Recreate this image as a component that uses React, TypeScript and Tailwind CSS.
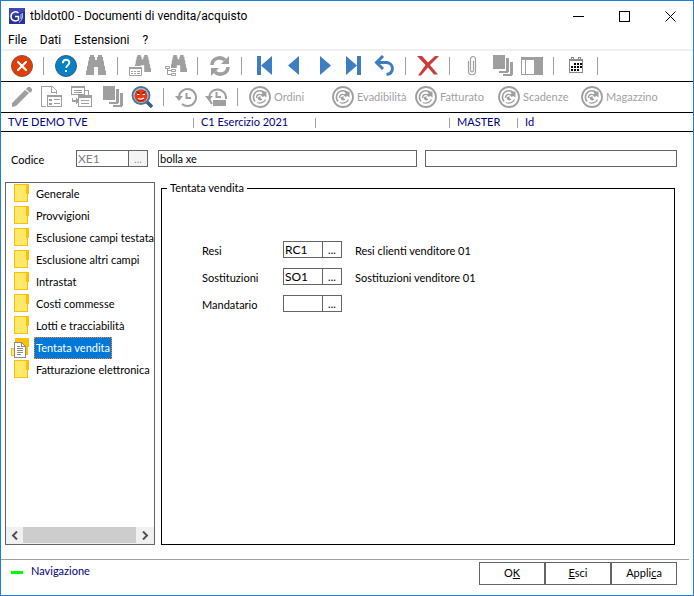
import type { ReactNode } from 'react';
import clsx from 'clsx';

const SECTIONS = [
  'Generale',
  'Provvigioni',
  'Esclusione campi testata',
  'Esclusione altri campi',
  'Intrastat',
  'Costi commesse',
  'Lotti e tracciabilità',
  'Tentata vendita',
  'Fatturazione elettronica',
];

const SELECTED = 'Tentata vendita';

const FIELDS = [
  { id: 'resi', label: 'Resi', value: 'RC1', description: 'Resi clienti venditore 01' },
  { id: 'sostituzioni', label: 'Sostituzioni', value: 'SO1', description: 'Sostituzioni venditore 01' },
  { id: 'mandatario', label: 'Mandatario', value: '', description: '' },
];

const LINKS = ['Ordini', 'Evadibilità', 'Fatturato', 'Scadenze', 'Magazzino'];

const GRAY = '#9f9f9f';
const BLUE = '#3d7ec3';

/* ---------- icons, all on a 22x22 grid ---------- */

function Icon({ children, crisp }: { children: ReactNode; crisp?: boolean }) {
  return (
    <svg
      width="22"
      height="22"
      viewBox="0 0 22 22"
      fill="none"
      className="shrink-0"
      shapeRendering={crisp ? 'crispEdges' : undefined}
      aria-hidden="true"
    >
      {children}
    </svg>
  );
}

const BINOCULARS = 'M4 0h4v2h1v3h2V2h1V0h4v2h1v3l1 2v3l1 2v3l1 1v4h-8v-8H8v8H0v-4l1-1v-3l1-2V7l1-2V2h1z';

function CloseCircle() {
  return (
    <Icon>
      <circle cx="11" cy="11" r="10.5" fill="#e13d05" stroke="#8d5040" />
      <path d="M7 7l8 8M15 7l-8 8" stroke="#fff" strokeWidth="2.2" strokeLinecap="round" />
    </Icon>
  );
}

function HelpCircle() {
  return (
    <Icon>
      <circle cx="11" cy="11" r="10.5" fill="#0a80c4" stroke="#2f5f80" />
      <path d="M7.800 8.200c0-4.600 6.600-4.400 6.600-.600 0 2.600-3.200 2.800-3.200 5.400" stroke="#fff" strokeWidth="1.8" />
      <path d="M10 15h2v2h-2z" fill="#fff" />
    </Icon>
  );
}

function Binoculars() {
  return (
    <Icon>
      <path d={BINOCULARS} transform="translate(1 0)" fill={GRAY} />
    </Icon>
  );
}

function BinocularsList() {
  return (
    <Icon>
      <path d={BINOCULARS} transform="translate(5 0) scale(.85)" fill={GRAY} />
      <path d="M0 11h14v11H0z" fill="#fff" />
      <path d="M.5 12.5h12v8H.5z" fill="#fff" stroke={GRAY} />
      <path d="M0 12h13v2H0z" fill={GRAY} />
      <path d="M2 16.5h2m1 0h2m1 0h3M2 18.5h2m1 0h2m1 0h3" stroke={GRAY} />
    </Icon>
  );
}

function BinocularsTree() {
  return (
    <Icon>
      <path d={BINOCULARS} transform="translate(5 0) scale(.85)" fill={GRAY} />
      <path d="M0 10h6v3h6v9H0z" fill="#fff" />
      <path d="M.5 11.5h4v2h-4zM6.5 14.5h4v2h-4zM6.5 18.5h4v2h-4zM2.5 14v5.500h4M2.500 15.500h4" stroke={GRAY} />
    </Icon>
  );
}

function Refresh() {
  return (
    <Icon>
      <path d="M3 10c0-7 9-9 13-5" stroke={GRAY} strokeWidth="3.5" />
      <path d="M20 1v8h-8z" fill={GRAY} />
      <path d="M19 12c0 7-9 9-13 5" stroke={GRAY} strokeWidth="3.5" />
      <path d="M2 21v-8h8z" fill={GRAY} />
    </Icon>
  );
}

function First() {
  return (
    <Icon>
      <path d="M4 1h4v19H4zM19 1v19L8 10.500z" fill={BLUE} />
    </Icon>
  );
}

function Previous() {
  return (
    <Icon>
      <path d="M16 1v19L5 10.500z" fill={BLUE} />
    </Icon>
  );
}

function Next() {
  return (
    <Icon>
      <path d="M7 1v19l11-9.500z" fill={BLUE} />
    </Icon>
  );
}

function Last() {
  return (
    <Icon>
      <path d="M14 1h4v19h-4zM3 1v19l11-9.500z" fill={BLUE} />
    </Icon>
  );
}

function Undo() {
  return (
    <Icon>
      <path d="M10 1L3.500 7.500 10 14M4 7.500h10c7 1 7.500 11-.500 12" stroke={BLUE} strokeWidth="3" />
    </Icon>
  );
}

function RedCross() {
  return (
    <Icon>
      <path d="M0 1h5l6 6.500L18 1h4l-9 9 8 9.500h-4L11 12.500l-7 8H1L8.500 10z" fill="#c93c3c" />
    </Icon>
  );
}

function Clip() {
  return (
    <Icon>
      <path
        d="M7.500 6v10c0 5 7 5 7 0V4.500c0-4-5-4-5 0V15c0 2.500 3 2.500 3 0V6"
        stroke={GRAY}
        strokeWidth="1.200"
      />
    </Icon>
  );
}

function Stack() {
  return (
    <Icon crisp>
      <path d="M2 0h12v14H2z" fill={GRAY} />
      <path d="M15 3h3v14l-2 1H8v-2h7zM19 7h3v13l-2 1h-8v-2h7z" fill={GRAY} />
    </Icon>
  );
}

function SidePanel() {
  return (
    <Icon crisp>
      <path d="M0 2h22v18H0z" fill={GRAY} />
      <path d="M1 5h3v14H1zM5 5h8v14H5z" fill="#fff" />
    </Icon>
  );
}

function Calendar() {
  return (
    <Icon crisp>
      <path d="M4.500 4.500h13v13h-13z" stroke="#8a8a8a" />
      <path d="M4 4h14v2H4z" fill="#8a8a8a" />
      <path d="M6.500 2.500h2v2h-2zM13.500 2.500h2v2h-2z" fill="#fff" stroke="#8a8a8a" />
      <path
        d="M9 8h2v2H9zM12 8h2v2h-2zM15 8h2v2h-2zM6 11h2v2H6zM9 11h2v2H9zM12 11h2v2h-2zM15 11h2v2h-2zM6 14h2v2H6zM9 14h2v2H9zM12 14h2v2h-2z"
        fill="#000"
      />
    </Icon>
  );
}

function Pencil() {
  return (
    <Icon>
      <path d="M1 21v-4L14 4l4 3L5 20zM15 3l2-2h2l2 2v2l-2 2z" fill={GRAY} />
    </Icon>
  );
}

function PageForm() {
  return (
    <Icon crisp>
      <path d="M5 20.500H.500v-20h11l4 4V8" stroke={GRAY} />
      <path d="M10.500 1v5H15" stroke={GRAY} />
      <path d="M6.500 9.500h14v11h-14z" fill="#fff" stroke={GRAY} />
      <path d="M6 9h15v2H6zM8 13h3v2H8zM8 17h3v2H8zM13 13h6v1h-6zM13 17h6v1h-6z" fill={GRAY} />
    </Icon>
  );
}

function FormTransfer() {
  return (
    <Icon crisp>
      <path d="M.500.500h13v8H.500z" stroke={GRAY} />
      <path d="M0 0h14v2H0zM3 4h8v1H3zM3 6h8v1H3zM14 4h4v5h-1V5h-3z" fill={GRAY} />
      <path d="M7.500 10.500h13v10h-13z" stroke={GRAY} />
      <path d="M7 9h14v3H7zM10 14h8v1h-8zM10 17h8v1h-8z" fill={GRAY} />
      <path d="M1 12h1v2h3v-2l3 3-3 3v-2H1z" fill={GRAY} />
    </Icon>
  );
}

function Debug() {
  return (
    <Icon>
      <path d="M15 15l6 6" stroke="#395a80" strokeWidth="3.500" />
      <circle cx="10" cy="9.500" r="8.500" fill="#a9c8df" stroke="#4c7297" strokeWidth="1.800" />
      <circle cx="10" cy="9.800" r="6.500" fill="#e83b14" />
      <path d="M5.500 5.500L9 7.500M14.500 5.500L11 7.500" stroke="#611a10" />
      <path d="M6 8.500h2.500M11.500 8.500H14" stroke="#fff" />
      <path d="M7 12.500c2 1 4 .800 6-.500" stroke="#fff" strokeWidth="1.200" />
      <path d="M7 14c2 1 4 .800 6-.500" stroke="#611a10" strokeWidth=".7" />
    </Icon>
  );
}

function History() {
  return (
    <Icon>
      <path d="M4 11a8.500 8.500 0 1 1 3 7" stroke={GRAY} strokeWidth="2" />
      <path d="M0 10h8l-4 5z" fill={GRAY} />
      <path d="M11.500 7v5H16" stroke={GRAY} strokeWidth="2" />
    </Icon>
  );
}

function HistoryLock() {
  return (
    <Icon>
      <path d="M4 11a8.500 8.500 0 0 1 17 2M4 13l3 5" stroke={GRAY} strokeWidth="2" />
      <path d="M0 10h8l-4 5zM8 14h13v6H8z" fill={GRAY} />
      <path d="M11.500 6v5H16" stroke={GRAY} strokeWidth="2" />
    </Icon>
  );
}

function Gauge() {
  return (
    <Icon>
      <circle cx="11" cy="11" r="10" stroke={GRAY} strokeWidth="1.800" />
      <path d="M6 15.500C2.500 11 5.500 4.800 11 4.800c2 0 3.500.700 4.700 1.900" stroke={GRAY} strokeWidth="1.600" />
      <path d="M17.500 5.500v6l-2-1.500-2 1-1.500-2 1.500-1.500-1-1.500z" fill={GRAY} />
      <path d="M7.500 12c0-4.500 5-4.500 6-2M8 16.500c3.500 1.500 7 0 8.500-3" stroke={GRAY} strokeWidth="1.300" />
      <path d="M8.500 11.500l3-1.500v2l2 1.500c-1.500 1.500-4.500 1.500-5-2z" fill={GRAY} />
    </Icon>
  );
}

function FolderIcon() {
  return (
    <svg width="18" height="22" viewBox="0 0 18 22" className="shrink-0" shapeRendering="crispEdges" aria-hidden="true">
      <path d="M3 1h15v10h-1v8H3z" fill="#ffc000" />
      <path d="M4 2h11v9h1v7H4z" fill="#ffe96b" />
    </svg>
  );
}

function OpenFolderIcon() {
  return (
    <svg width="18" height="22" viewBox="0 0 18 22" className="shrink-0" shapeRendering="crispEdges" aria-hidden="true">
      <path d="M4 1h14v9h-1v8H4z" fill="#ffc000" />
      <path d="M.500 11.500h4v7h-4z" fill="#ffe96b" stroke="#ffc000" />
      <path d="M3.500 5.500h7l4 4v11h-11z" fill="#fff" stroke="#8b8b8b" />
      <path d="M10.500 5.500v4h4M6 9.500h3M6 11.500h6M6 13.500h6M6 15.500h6M6 17.500h4" fill="none" stroke="#8b8b8b" />
    </svg>
  );
}

/* ---------- small parts ---------- */

function ToolButton({ label, children, className }: { label: string; children: ReactNode; className?: string }) {
  return (
    <button aria-label={label} className={clsx('flex h-full w-[30px] shrink-0 items-center justify-center', className)}>
      {children}
    </button>
  );
}

function Separator() {
  return <span className="ml-[6px] mr-[7px] h-[18px] w-px shrink-0 bg-[#a0a0a0]" />;
}

function InfoSeparator() {
  return <span className="mr-[7px] h-[10px] w-px shrink-0 bg-[#a0a0a0]" />;
}

function LookupField({ id, value, label }: { id: string; value: string; label: string }) {
  return (
    <div className="flex h-[17px]">
      <input
        id={id}
        defaultValue={value}
        className="w-10 border border-[#646464] px-px text-xs leading-3 outline-none"
      />
      <button
        aria-label={`Cerca ${label}`}
        className="-ml-px w-5 border border-[#646464] leading-3"
      >
        ...
      </button>
    </div>
  );
}

function TitleBar() {
  return (
    <header className="flex h-[30px] shrink-0 items-center pl-2 font-['Roboto','Liberation_Sans',sans-serif]">
      <svg width="16" height="16" viewBox="0 0 16 16" fill="none" aria-hidden="true">
        <path d="M0 0h16v16H0z" fill="#4146b4" />
        <path d="M0 9l16-6v13H0z" fill="#29329a" />
        <path d="M9.500 5C6 2.500 2 4.500 2 8.500s4.500 5.500 7.500 3.500V8.500H6" stroke="#fff" strokeWidth="1.500" />
        <path d="M13 5c1.500 3 0 7.500-3 9.500M12 6v5" stroke="#cfd3ff" />
      </svg>
      <h1 className="ml-[5px] flex-1 text-xs">tbldot00 - Documenti di vendita/acquisto</h1>
      <button aria-label="Riduci" className="flex h-full w-[45px] items-center justify-center">
        <svg width="11" height="11" viewBox="0 0 11 11" stroke="#000" shapeRendering="crispEdges"><path d="M0 5.500h11" /></svg>
      </button>
      <button aria-label="Ingrandisci" className="flex h-full w-[46px] items-center justify-center">
        <svg width="11" height="11" viewBox="0 0 11 11" fill="none" stroke="#000" shapeRendering="crispEdges"><path d="M.500.500h10v10H.500z" /></svg>
      </button>
      <button aria-label="Chiudi" className="flex h-full w-[46px] items-center justify-center">
        <svg width="11" height="11" viewBox="0 0 11 11" stroke="#000"><path d="M.500.500l10 10M10.500.500l-10 10" /></svg>
      </button>
    </header>
  );
}

function MainToolbar() {
  return (
    <div className="flex h-[31px] shrink-0 items-center border-b border-black pl-[6px]">
      <ToolButton label="Esci"><CloseCircle /></ToolButton>
      <Separator />
      <ToolButton label="Aiuto"><HelpCircle /></ToolButton>
      <ToolButton label="Cerca"><Binoculars /></ToolButton>
      <Separator />
      <ToolButton label="Cerca in elenco"><BinocularsList /></ToolButton>
      <ToolButton label="Cerca in albero" className="ml-[6px]"><BinocularsTree /></ToolButton>
      <Separator />
      <ToolButton label="Aggiorna"><Refresh /></ToolButton>
      <Separator />
      <ToolButton label="Primo"><First /></ToolButton>
      <ToolButton label="Precedente"><Previous /></ToolButton>
      <ToolButton label="Successivo"><Next /></ToolButton>
      <ToolButton label="Ultimo"><Last /></ToolButton>
      <ToolButton label="Annulla"><Undo /></ToolButton>
      <Separator />
      <ToolButton label="Elimina"><RedCross /></ToolButton>
      <Separator />
      <ToolButton label="Allegati"><Clip /></ToolButton>
      <ToolButton label="Copie"><Stack /></ToolButton>
      <ToolButton label="Pannello"><SidePanel /></ToolButton>
      <Separator />
      <ToolButton label="Calendario"><Calendar /></ToolButton>
      <Separator />
    </div>
  );
}

function DocumentToolbar() {
  return (
    <div className="flex h-[31px] shrink-0 items-center border-b border-black pl-[6px]">
      <ToolButton label="Modifica"><Pencil /></ToolButton>
      <ToolButton label="Scheda"><PageForm /></ToolButton>
      <ToolButton label="Trasferisci"><FormTransfer /></ToolButton>
      <ToolButton label="Duplica"><Stack /></ToolButton>
      <ToolButton label="Debug"><Debug /></ToolButton>
      <Separator />
      <ToolButton label="Storico"><History /></ToolButton>
      <ToolButton label="Storico bloccato"><HistoryLock /></ToolButton>
      <Separator />
      {LINKS.map((link) => (
        <button key={link} className="flex h-full w-[83px] shrink-0 items-center gap-[3px] pl-1 text-[#9f9f9f]">
          <Gauge />
          {link}
        </button>
      ))}
    </div>
  );
}

function SectionList() {
  return (
    <nav className="flex w-[150px] shrink-0 flex-col overflow-hidden border border-[#646464]">
      <ul className="flex-1">
        {SECTIONS.map((section) => {
          const selected = section === SELECTED;
          return (
            <li key={section}>
              <button className="flex h-[22px] items-center gap-[5px] pl-[5px] whitespace-nowrap">
                {selected ? <OpenFolderIcon /> : <FolderIcon />}
                <span
                  className={clsx(
                    'flex h-[22px] items-center border px-px',
                    selected ? 'border-dotted border-[#ff8728] bg-[#0078d7] text-white' : 'border-transparent',
                  )}
                >
                  {section}
                </span>
              </button>
            </li>
          );
        })}
      </ul>
      <div className="flex h-[17px] bg-[#f0f0f0]">
        <button aria-label="Scorri a sinistra" className="flex w-[17px] items-center justify-center">
          <svg width="7" height="9" viewBox="0 0 7 9" fill="none" stroke="#505050" strokeWidth="2"><path d="M6 .500l-4 4 4 4" /></svg>
        </button>
        <span className="mb-px flex-1 bg-[#cdcdcd]" />
        <button aria-label="Scorri a destra" className="flex w-[18px] items-center justify-center">
          <svg width="7" height="9" viewBox="0 0 7 9" fill="none" stroke="#505050" strokeWidth="2"><path d="M1 .500l4 4-4 4" /></svg>
        </button>
      </div>
    </nav>
  );
}

export default function App() {
  return (
    <div className="flex min-h-screen flex-col border border-[#1a80d6] bg-white font-['Lato','Liberation_Sans',sans-serif] text-[11px] text-black">
      <TitleBar />

      <nav className="flex h-5 shrink-0 items-center gap-[13px] border-b-2 border-[#f0f0f0] pl-[7px] font-['Roboto','Liberation_Sans',sans-serif] text-xs">
        <button>File</button>
        <button>Dati</button>
        <button>Estensioni</button>
        <button>?</button>
      </nav>

      <MainToolbar />
      <DocumentToolbar />

      <div className="flex h-[19px] shrink-0 items-center border-b border-black pt-px text-[#000080]">
        <span className="w-48 pl-[7px]">TVE DEMO TVE</span>
        <InfoSeparator />
        <span className="w-[114px]">C1 Esercizio 2021</span>
        <InfoSeparator />
        <span className="w-[126px]" />
        <InfoSeparator />
        <span className="w-[60px]">MASTER</span>
        <InfoSeparator />
        <span>Id</span>
      </div>

      <form className="flex flex-1 flex-col" onSubmit={(e) => e.preventDefault()}>
        <div className="mt-[18px] flex h-[17px] items-end pr-4 pl-[10px]">
          <label htmlFor="codice" className="w-[65px] shrink-0 leading-[14px]">Codice</label>
          <input
            id="codice"
            defaultValue="XE1"
            disabled
            className="h-full w-[53px] border border-[#646464] px-px text-xs leading-3 text-[#808080]"
          />
          <button
            aria-label="Cerca codice"
            disabled
            className="-ml-px h-full w-5 border border-[#646464] bg-[#f4f4f4] leading-3 text-[#a0a0a0]"
          >
            ...
          </button>
          <input
            aria-label="Descrizione"
            defaultValue="bolla xe"
            className="ml-[10px] h-full min-w-0 flex-[260] border border-[#646464] px-px outline-none"
          />
          <input
            aria-label="Descrizione aggiuntiva"
            className="ml-2 h-full min-w-0 flex-[252] border border-[#646464] px-px outline-none"
          />
        </div>

        <div className="mt-[15px] flex flex-1 gap-[6px] pr-[18px] pl-1">
          <SectionList />
          <fieldset className="min-w-0 flex-1 border border-black">
            <legend className="ml-[5px] px-[3px] leading-3">Tentata vendita</legend>
            <div className="flex flex-col gap-[10px] pt-[47px] pl-10">
              {FIELDS.map((field) => (
                <div key={field.id} className="flex items-end leading-[14px]">
                  <label htmlFor={field.id} className="w-[81px]">{field.label}</label>
                  <LookupField id={field.id} value={field.value} label={field.label} />
                  <span className="ml-[13px]">{field.description}</span>
                </div>
              ))}
            </div>
          </fieldset>
        </div>

        <footer className="mt-[14px] mr-1 flex h-9 shrink-0 border-t border-[#a0a0a0] pr-3">
          <span className="mt-[11px] ml-[10px] h-[3px] w-3 bg-[#00ff00]" />
          <span className="mt-[3px] ml-2 flex-1 leading-4 text-[#000080]">Navigazione</span>
          <div className="mt-[2px] flex h-[23px]">
            <button className="w-[66px] border border-[#646464]">O<u>K</u></button>
            <button className="w-[66px] border border-[#646464]"><u>E</u>sci</button>
            <button className="w-[66px] border border-[#646464]">Appli<u>c</u>a</button>
          </div>
        </footer>
      </form>
    </div>
  );
}
